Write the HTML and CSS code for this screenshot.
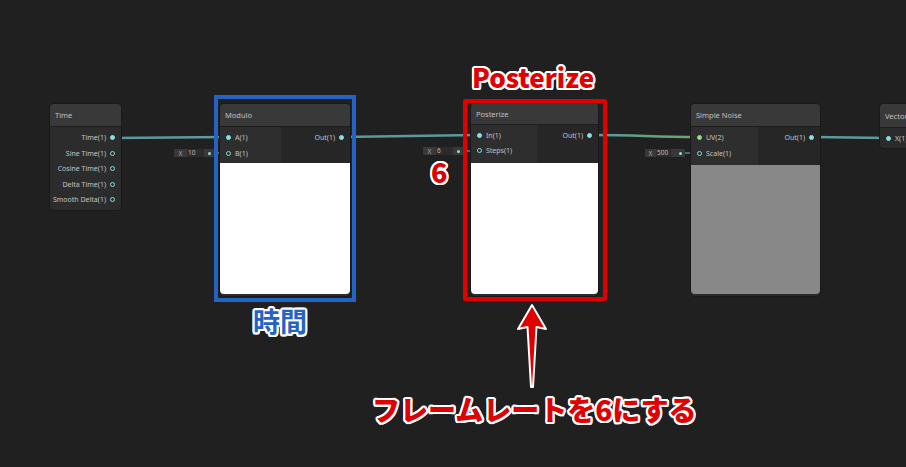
FILE: index.html
```html
<!DOCTYPE html>
<html lang="ja">
<head>
<meta charset="utf-8">
<title>Shader Graph</title>
<link rel="stylesheet" href="styles.css">
</head>
<body>
<div class="canvas">
  <svg class="wires" width="906" height="467" viewBox="0 0 906 467">
    <defs>
      <linearGradient id="g1" x1="592" y1="0" x2="698" y2="0" gradientUnits="userSpaceOnUse">
        <stop offset="0" stop-color="#5a9a9c"/>
        <stop offset="1" stop-color="#6ea86a"/>
      </linearGradient>
    </defs>
    <path d="M113 138 L228 137" stroke="#5a9a9c" stroke-width="2.5" fill="none"/>
    <path d="M342 137 L477 135" stroke="#5a9a9c" stroke-width="2.5" fill="none"/>
    <path d="M592 135 C640 135 650 137 698 137" stroke="url(#g1)" stroke-width="2.5" fill="none"/>
    <path d="M813 137 L887 138" stroke="#5a9a9c" stroke-width="2.5" fill="none"/>
    <path d="M211 153 L228 153" stroke="#4e8a8c" stroke-width="1.5" fill="none"/>
    <path d="M460 151 L477 151" stroke="#4e8a8c" stroke-width="1.5" fill="none"/>
    <path d="M681 153 L698 153" stroke="#4e8a8c" stroke-width="1.5" fill="none"/>
  </svg>

  <div class="node n-time">
    <div class="head">Time</div>
    <div class="outlist">
      <div class="row out"><span>Time(1)</span><i class="port on"></i></div>
      <div class="row out"><span>Sine Time(1)</span><i class="port"></i></div>
      <div class="row out"><span>Cosine Time(1)</span><i class="port"></i></div>
      <div class="row out"><span>Delta Time(1)</span><i class="port"></i></div>
      <div class="row out"><span>Smooth Delta(1)</span><i class="port"></i></div>
    </div>
  </div>

  <div class="field f-mod"><span class="fx">X</span><span class="fv">10</span><i class="fdot"></i></div>
  <div class="node n-mod">
    <div class="head">Modulo</div>
    <div class="ports">
      <div class="ins">
        <div class="row in"><i class="port on"></i><span>A(1)</span></div>
        <div class="row in"><i class="port"></i><span>B(1)</span></div>
      </div>
      <div class="outs">
        <div class="row out"><span>Out(1)</span><i class="port on"></i></div>
      </div>
    </div>
    <div class="preview white"></div>
  </div>

  <div class="field f-post"><span class="fx">X</span><span class="fv">6</span><i class="fdot"></i></div>
  <div class="node n-post">
    <div class="head">Posterize</div>
    <div class="ports">
      <div class="ins">
        <div class="row in"><i class="port on"></i><span>In(1)</span></div>
        <div class="row in"><i class="port"></i><span>Steps(1)</span></div>
      </div>
      <div class="outs">
        <div class="row out"><span>Out(1)</span><i class="port on"></i></div>
      </div>
    </div>
    <div class="preview white"></div>
  </div>

  <div class="field f-noise"><span class="fx">X</span><span class="fv">500</span><i class="fdot"></i></div>
  <div class="node n-noise">
    <div class="head">Simple Noise</div>
    <div class="ports">
      <div class="ins">
        <div class="row in"><i class="port on green"></i><span>UV(2)</span></div>
        <div class="row in"><i class="port"></i><span>Scale(1)</span></div>
      </div>
      <div class="outs">
        <div class="row out"><span>Out(1)</span><i class="port on"></i></div>
      </div>
    </div>
    <div class="preview gray"></div>
  </div>

  <div class="node n-vec">
    <div class="head">Vector 1</div>
    <div class="ins solo">
      <div class="row in"><i class="port on"></i><span>X(1)</span></div>
    </div>
  </div>

  <div class="box blue"></div>
  <div class="box red"></div>

  <div class="note t-post">Posterize</div>
  <div class="note t-six">6</div>
  <div class="note t-time">時間</div>
  <div class="note t-frame">フレームレートを6にする</div>

  <svg class="arrow" width="40" height="90" viewBox="0 0 40 90">
    <path d="M20 2 L34 26 L24.5 24 L21 84 L19 84 L15.5 24 L6 26 Z" fill="#e00000" stroke="#ffffff" stroke-width="2" stroke-linejoin="round"/>
  </svg>
</div>
</body>
</html>
```
FILE: styles.css
```css
html, body {
  margin: 0;
  padding: 0;
  background: #202020;
}
.canvas {
  position: relative;
  width: 906px;
  height: 467px;
  overflow: hidden;
  background: #202020;
  font-family: "Noto Sans", "Open Sans", sans-serif;
  color: #c8c8c8;
}
.wires {
  position: absolute;
  left: 0;
  top: 0;
}
.node {
  position: absolute;
  display: flex;
  flex-direction: column;
  background: #2b2b2b;
  border-radius: 4px;
  box-shadow: 0 0 0 1px #191919;
  overflow: hidden;
}
.head {
  height: 23px;
  flex: none;
  display: flex;
  align-items: center;
  padding-left: 5px;
  background: #393939;
  font-size: 7.5px;
  color: #c0c0c0;
  border-bottom: 1px solid #1d1d1d;
  box-sizing: border-box;
  white-space: nowrap;
}
.row {
  display: flex;
  align-items: center;
  font-size: 7px;
  color: #c4c4c4;
  white-space: nowrap;
}
.row.out { justify-content: flex-end; }
.row.out span { margin-right: 4px; }
.row.in span { margin-left: 4px; }
.port {
  display: block;
  width: 5px;
  height: 5px;
  border-radius: 50%;
  box-sizing: border-box;
  border: 1.2px solid #84e2e6;
  background: #2a2a2a;
  flex: none;
}
.port.on {
  background: #84e2e6;
}
.port.green {
  border-color: #8ee07c;
  background: #8ee07c;
}

/* Time node */
.n-time { left: 50px; top: 104px; width: 71px; height: 106px; background: #2c2c2c; }
.outlist {
  display: flex;
  flex-direction: column;
  padding: 3px 6px 0 0;
}
.outlist .row { height: 15.5px; }

/* two-column nodes */
.ports {
  display: flex;
  flex: none;
}
.ins {
  display: flex;
  flex-direction: column;
  background: #2e2e2e;
  padding: 2px 0 0 6px;
  box-sizing: border-box;
}
.ins .row { height: 16px; }
.outs {
  flex: 1;
  display: flex;
  flex-direction: column;
  background: #262626;
  padding: 2px 6px 0 0;
  box-sizing: border-box;
}
.outs .row { height: 16px; }
.preview {
  flex: none;
  border-radius: 0 0 4px 4px;
}
.preview.white { background: #ffffff; }
.preview.gray { background: #888888; }

.n-mod { left: 220px; top: 104px; width: 130px; height: 192px; }
.n-mod .ports { height: 36px; }
.n-mod .ins { width: 61px; }
.n-mod .preview { height: 131px; }

.n-post { left: 471px; top: 103px; width: 127px; height: 193px; }
.n-post .head { height: 22px; }
.n-post .ports { height: 38px; }
.n-post .ins { width: 66px; padding-top: 3px; }
.n-post .outs { padding-top: 3px; }
.n-post .ins .row, .n-post .outs .row { height: 15px; }
.n-post .preview { height: 131px; }

.n-noise { left: 691px; top: 104px; width: 129px; height: 192px; }
.n-noise .ports { height: 38px; }
.n-noise .ins { width: 67px; }
.n-noise .preview { height: 129px; }

.n-vec { left: 880px; top: 104px; width: 44px; height: 44px; }
.n-vec .head { height: 24px; }
.ins.solo { flex: 1; background: #2b2b2b; padding-top: 2px; }

/* input fields */
.field {
  position: absolute;
  height: 8px;
  display: flex;
  align-items: center;
  background: #383838;
  font-size: 6.5px;
  color: #a8a8a8;
}
.fx { width: 13px; text-align: center; flex: none; }
.fv {
  height: 8px;
  line-height: 8px;
  background: #2c2c2c;
  color: #bdbdbd;
  padding-left: 1px;
  box-sizing: border-box;
}
.fdot {
  display: block;
  width: 3px;
  height: 3px;
  border-radius: 50%;
  background: #84e2e6;
  margin-left: auto;
  margin-right: 3px;
}
.f-mod { left: 174px; top: 149px; width: 40px; }
.f-mod .fv { width: 17px; }
.f-post { left: 423px; top: 147px; width: 40px; }
.f-post .fv { width: 17px; }
.f-noise { left: 645px; top: 149px; width: 40px; }
.f-noise .fx { width: 11px; }
.f-noise .fv { width: 15px; }

/* annotation boxes */
.box {
  position: absolute;
  box-sizing: border-box;
  border-width: 4.5px;
  border-style: solid;
}
.box.blue { left: 214px; top: 95px; width: 142px; height: 207px; border-color: #2463c4; }
.box.red { left: 463px; top: 99px; width: 144px; height: 202px; border-color: #e00000; border-radius: 2px; }

.note {
  position: absolute;
  font-family: "Noto Sans CJK JP", "Noto Sans", sans-serif;
  font-weight: 900;
  white-space: nowrap;
  line-height: 1;
  text-shadow:
    2px 0 0 #fff, -2px 0 0 #fff, 0 2px 0 #fff, 0 -2px 0 #fff,
    1.5px 1.5px 0 #fff, -1.5px 1.5px 0 #fff, 1.5px -1.5px 0 #fff, -1.5px -1.5px 0 #fff,
    2px 1px 0 #fff, -2px 1px 0 #fff, 2px -1px 0 #fff, -2px -1px 0 #fff,
    1px 2px 0 #fff, -1px 2px 0 #fff, 1px -2px 0 #fff, -1px -2px 0 #fff;
}
.t-post { left: 472px; top: 64px; font-size: 26px; color: #e00000; }
.t-six { left: 431px; top: 161px; font-size: 27px; line-height: 22px; color: #e00000; }
.t-time { left: 253px; top: 307px; font-size: 27px; color: #2463c4; font-weight: 700; }
.t-frame { left: 372px; top: 395px; font-size: 28px; color: #e00000; }

.arrow {
  position: absolute;
  left: 512px;
  top: 303px;
}
```
